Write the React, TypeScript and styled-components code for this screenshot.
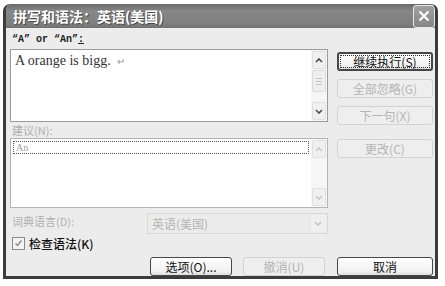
import styled, { createGlobalStyle } from "styled-components";

const GlobalStyle = createGlobalStyle`
  body {
    margin: 0;
    background: #ffffff;
    font-family: "Noto Sans CJK SC", "Liberation Sans", sans-serif;
  }
`;

const Page = styled.div`
  width: 445px;
  height: 286px;
  padding: 4px 0 0 3px;
  box-sizing: border-box;
`;

const Window = styled.div`
  width: 435px;
  height: 275px;
  box-sizing: border-box;
  background: #ececec;
  border: 3px solid #3c3c3c;
  border-top: none;
  border-radius: 7px 7px 0 0;
  display: flex;
  flex-direction: column;
  overflow: hidden;
`;

const TitleBar = styled.div`
  height: 28px;
  margin: 0 -3px;
  padding: 0 3px 0 10px;
  display: flex;
  align-items: center;
  justify-content: space-between;
  background: linear-gradient(#6a6a6a, #878787 30%, #7e7e7e 85%, #707070);
  border-radius: 7px 7px 0 0;
`;

const Title = styled.span`
  color: #ffffff;
  font-size: 14px;
  font-weight: 700;
  text-shadow: 1px 1px 0 #4a4a4a;
`;

const CloseButton = styled.div`
  width: 20px;
  height: 21px;
  border: 1px solid #e8e8e8;
  border-radius: 3px;
  background: linear-gradient(#a0a0a0, #858585);
  display: flex;
  align-items: center;
  justify-content: center;
`;

const Body = styled.div`
  flex: 1;
  display: grid;
  grid-template-columns: 318px 96px;
  grid-template-rows: 16px 73px 16px 70px 26px 18px 1fr;
  column-gap: 9px;
  padding: 5px 0 0 4px;
`;

const MonoLabel = styled.div`
  font-family: "Liberation Mono", monospace;
  font-weight: 700;
  font-size: 10px;
  line-height: 14px;
  padding-left: 2px;
  color: #222;
  u { text-decoration: underline; }
`;

const Label = styled.div<{ $disabled?: boolean }>`
  font-size: 11px;
  line-height: 16px;
  padding-left: 2px;
  color: ${(p) => (p.$disabled ? "#b0b0b0" : "#111")};
`;

const Box = styled.div<{ $disabled?: boolean }>`
  position: relative;
  background: #ffffff;
  border: 1px solid ${(p) => (p.$disabled ? "#b4b4b4" : "#9a9a9a")};
  box-sizing: border-box;
  display: flex;
`;

const BoxContent = styled.div`
  flex: 1;
  padding: 2px;
`;

const SentenceText = styled.div`
  font-family: "Liberation Serif", serif;
  font-size: 14px;
  color: #333;
  padding: 1px 2px;
`;

const Return = styled.span`
  font-size: 10px;
  color: #999;
  margin-left: 6px;
`;

const Suggestion = styled.div`
  font-family: "Liberation Serif", serif;
  font-size: 10px;
  line-height: 11px;
  color: #a0a0a0;
  padding: 0 2px;
  border: 1px dotted #555;
`;

const ScrollBar = styled.div`
  width: 16px;
  background: #f6f6f6;
  display: flex;
  flex-direction: column;
  justify-content: space-between;
  padding: 1px;
  box-sizing: border-box;
`;

const ArrowButton = styled.div<{ $disabled?: boolean }>`
  height: 16px;
  border: 1px solid #e0e0e0;
  border-radius: 2px;
  background: #f0f0f0;
  display: flex;
  align-items: center;
  justify-content: center;
  color: ${(p) => (p.$disabled ? "#c8c8c8" : "#4a4a4a")};
`;

const Thumb = styled.div`
  height: 20px;
  margin-top: 1px;
  border: 1px solid #dcdcdc;
  border-radius: 2px;
  background: #efefef;
  display: flex;
  flex-direction: column;
  align-items: center;
  justify-content: center;
  gap: 2px;
  span { width: 6px; height: 1px; background: #c4c4c4; }
`;

const Track = styled.div`
  flex: 1;
  display: flex;
  flex-direction: column;
`;

const ButtonStack = styled.div`
  display: flex;
  flex-direction: column;
  gap: 8px;
  padding-top: 3px;
`;

const SideCell = styled.div`
  padding-top: 1px;
`;

const Button = styled.div<{ $disabled?: boolean; $default?: boolean; $width?: number }>`
  width: ${(p) => (p.$width ? `${p.$width}px` : "100%")};
  height: 19px;
  box-sizing: border-box;
  border: ${(p) => (p.$default ? "2px" : "1px")} solid
    ${(p) => (p.$disabled ? "#d2d2d2" : "#474747")};
  border-radius: 3px;
  background: ${(p) => (p.$disabled ? "#eeeeee" : "linear-gradient(#ffffff, #f0f0f0 80%, #dcdcdc)")};
  color: ${(p) => (p.$disabled ? "#b4b4b4" : "#111")};
  font-size: 12px;
  display: flex;
  align-items: center;
  justify-content: center;
  position: relative;
  ${(p) =>
    p.$default &&
    `&::after { content: ""; position: absolute; inset: 1px; border: 1px dotted #333; }`}
`;

const DictRow = styled.div`
  display: flex;
  align-items: flex-start;
  justify-content: space-between;
  padding-top: 5px;
`;

const Combo = styled.div`
  width: 181px;
  height: 21px;
  box-sizing: border-box;
  border: 1px solid #d8d8d8;
  background: #ececec;
  display: flex;
  align-items: center;
  justify-content: space-between;
  padding-left: 4px;
  font-size: 12px;
  color: #b4b4b4;
`;

const ComboArrow = styled.div`
  width: 16px;
  height: 17px;
  margin-right: 1px;
  border-left: 1px solid #e2e2e2;
  background: #efefef;
  display: flex;
  align-items: center;
  justify-content: center;
  color: #c4c4c4;
`;

const CheckRow = styled.div`
  display: flex;
  align-items: center;
  gap: 4px;
  padding-left: 2px;
  font-size: 12px;
  font-weight: 500;
  color: #111;
  grid-column: 1 / span 2;
`;

const CheckBox = styled.div`
  width: 11px;
  height: 11px;
  border: 1px solid #8a8a8a;
  background: #f4f4f4;
  display: flex;
  align-items: center;
  justify-content: center;
`;

const BottomLeft = styled.div`
  display: flex;
  justify-content: flex-end;
  gap: 11px;
  padding: 5px 3px 0 0;
`;

const BottomRight = styled.div`
  padding-top: 5px;
`;

const Chevron = ({ up }: { up?: boolean }) => (
  <svg width="8" height="5" viewBox="0 0 8 5">
    <path
      d={up ? "M1 4 L4 1 L7 4" : "M1 1 L4 4 L7 1"}
      fill="none"
      stroke="currentColor"
      strokeWidth="1.6"
    />
  </svg>
);

const App = () => (
  <Page>
    <GlobalStyle />
    <Window>
      <TitleBar>
        <Title>拼写和语法：英语(美国)</Title>
        <CloseButton>
          <svg width="12" height="12" viewBox="0 0 12 12">
            <path d="M1.5 1.5 L10.5 10.5 M10.5 1.5 L1.5 10.5" stroke="#fff" strokeWidth="2.2" />
          </svg>
        </CloseButton>
      </TitleBar>
      <Body>
        <MonoLabel>
          “A” or “An”<u>:</u>
        </MonoLabel>
        <div />
        <Box>
          <BoxContent>
            <SentenceText>
              A orange is bigg.<Return>↵</Return>
            </SentenceText>
          </BoxContent>
          <ScrollBar>
            <Track>
              <ArrowButton>
                <Chevron up />
              </ArrowButton>
              <Thumb>
                <span />
                <span />
                <span />
              </Thumb>
            </Track>
            <ArrowButton>
              <Chevron />
            </ArrowButton>
          </ScrollBar>
        </Box>
        <ButtonStack>
          <Button $default>继续执行(S)</Button>
          <Button $disabled>全部忽略(G)</Button>
          <Button $disabled>下一句(X)</Button>
        </ButtonStack>
        <Label $disabled>建议(N):</Label>
        <div />
        <Box $disabled>
          <BoxContent>
            <Suggestion>An</Suggestion>
          </BoxContent>
          <ScrollBar>
            <ArrowButton $disabled>
              <Chevron up />
            </ArrowButton>
            <ArrowButton $disabled>
              <Chevron />
            </ArrowButton>
          </ScrollBar>
        </Box>
        <SideCell>
          <Button $disabled>更改(C)</Button>
        </SideCell>
        <DictRow>
          <Label $disabled>词典语言(D):</Label>
          <Combo>
            英语(美国)
            <ComboArrow>
              <Chevron />
            </ComboArrow>
          </Combo>
        </DictRow>
        <div />
        <CheckRow>
          <CheckBox>
            <svg width="9" height="9" viewBox="0 0 9 9">
              <path d="M1.5 4.5 L3.5 6.5 L7.5 1.5" fill="none" stroke="#888" strokeWidth="1.3" />
            </svg>
          </CheckBox>
          检查语法(K)
        </CheckRow>
        <BottomLeft>
          <Button $width={82}>选项(O)...</Button>
          <Button $width={82} $disabled>
            撤消(U)
          </Button>
        </BottomLeft>
        <BottomRight>
          <Button>取消</Button>
        </BottomRight>
      </Body>
    </Window>
  </Page>
);

export default App;
